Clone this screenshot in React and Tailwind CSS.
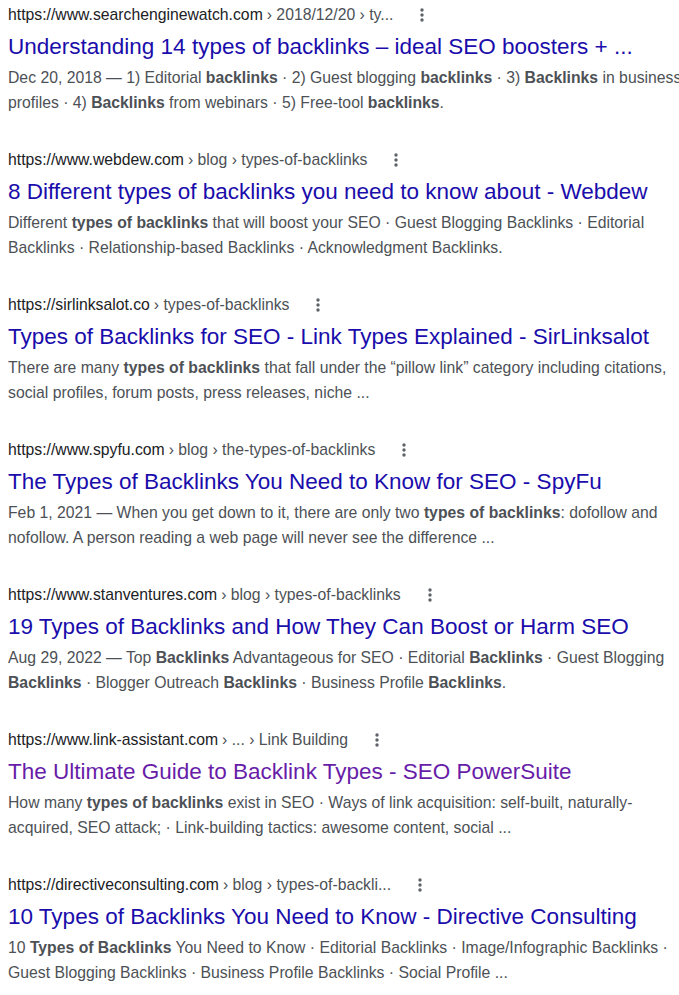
import React from "react";

const results = [
  {
    host: "https://www.searchenginewatch.com",
    path: "› 2018/12/20 › ty...",
    title: "Understanding 14 types of backlinks – ideal SEO boosters + ...",
    visited: false,
    lines: [
      [
        ["Dec 20, 2018 — 1) Editorial ", 0],
        ["backlinks", 1],
        [" · 2) Guest blogging ", 0],
        ["backlinks", 1],
        [" · 3) ", 0],
        ["Backlinks", 1],
        [" in business", 0],
      ],
      [
        ["profiles · 4) ", 0],
        ["Backlinks", 1],
        [" from webinars · 5) Free-tool ", 0],
        ["backlinks", 1],
        [".", 0],
      ],
    ],
  },
  {
    host: "https://www.webdew.com",
    path: "› blog › types-of-backlinks",
    title: "8 Different types of backlinks you need to know about - Webdew",
    visited: false,
    lines: [
      [
        ["Different ", 0],
        ["types of backlinks", 1],
        [" that will boost your SEO · Guest Blogging Backlinks · Editorial", 0],
      ],
      [["Backlinks · Relationship-based Backlinks · Acknowledgment Backlinks.", 0]],
    ],
  },
  {
    host: "https://sirlinksalot.co",
    path: "› types-of-backlinks",
    title: "Types of Backlinks for SEO - Link Types Explained - SirLinksalot",
    visited: false,
    lines: [
      [
        ["There are many ", 0],
        ["types of backlinks", 1],
        [" that fall under the “pillow link” category including citations,", 0],
      ],
      [["social profiles, forum posts, press releases, niche ...", 0]],
    ],
  },
  {
    host: "https://www.spyfu.com",
    path: "› blog › the-types-of-backlinks",
    title: "The Types of Backlinks You Need to Know for SEO - SpyFu",
    visited: false,
    lines: [
      [
        ["Feb 1, 2021 — When you get down to it, there are only two ", 0],
        ["types of backlinks", 1],
        [": dofollow and", 0],
      ],
      [["nofollow. A person reading a web page will never see the difference ...", 0]],
    ],
  },
  {
    host: "https://www.stanventures.com",
    path: "› blog › types-of-backlinks",
    title: "19 Types of Backlinks and How They Can Boost or Harm SEO",
    visited: false,
    lines: [
      [
        ["Aug 29, 2022 — Top ", 0],
        ["Backlinks", 1],
        [" Advantageous for SEO · Editorial ", 0],
        ["Backlinks", 1],
        [" · Guest Blogging", 0],
      ],
      [
        ["Backlinks", 1],
        [" · Blogger Outreach ", 0],
        ["Backlinks", 1],
        [" · Business Profile ", 0],
        ["Backlinks", 1],
        [".", 0],
      ],
    ],
  },
  {
    host: "https://www.link-assistant.com",
    path: "› ... › Link Building",
    title: "The Ultimate Guide to Backlink Types - SEO PowerSuite",
    visited: true,
    lines: [
      [
        ["How many ", 0],
        ["types of backlinks", 1],
        [" exist in SEO · Ways of link acquisition: self-built, naturally-", 0],
      ],
      [["acquired, SEO attack; · Link-building tactics: awesome content, social ...", 0]],
    ],
  },
  {
    host: "https://directiveconsulting.com",
    path: "› blog › types-of-backli...",
    title: "10 Types of Backlinks You Need to Know - Directive Consulting",
    visited: false,
    lines: [
      [
        ["10 ", 0],
        ["Types of Backlinks", 1],
        [" You Need to Know · Editorial Backlinks · Image/Infographic Backlinks ·", 0],
      ],
      [["Guest Blogging Backlinks · Business Profile Backlinks · Social Profile ...", 0]],
    ],
  },
];

function Dots() {
  return (
    <svg width="4" height="14" viewBox="0 0 4 14" className="ml-[27px] shrink-0">
      <circle cx="2" cy="2" r="1.7" fill="#5f6368" />
      <circle cx="2" cy="7" r="1.7" fill="#5f6368" />
      <circle cx="2" cy="12" r="1.7" fill="#5f6368" />
    </svg>
  );
}

function Result({ r }) {
  return (
    <div className="mb-[35px]">
      <div className="flex items-center h-[20px] text-[15.75px] leading-[20px] whitespace-nowrap">
        <span className="text-[#202124]">{r.host}</span>
        <span className="text-[#4d5156] ml-[4px]">{r.path}</span>
        <Dots />
      </div>
      <div
        className={
          "mt-[8px] h-[28px] text-[22.5px] leading-[28px] whitespace-nowrap " +
          (r.visited ? "text-[#681da8]" : "text-[#1a0dab]")
        }
      >
        {r.title}
      </div>
      <div className="mt-[5px] text-[15.75px] leading-[24.5px] text-[#4d5156] whitespace-nowrap">
        {r.lines.map((line, li) => (
          <div key={li}>
            {line.map(([t, b], i) =>
              b ? (
                <b key={i} className="font-bold text-[#4d5156]">
                  {t}
                </b>
              ) : (
                <span key={i}>{t}</span>
              )
            )}
          </div>
        ))}
      </div>
    </div>
  );
}

export default function App() {
  return (
    <div className="w-[679px] h-[995px] bg-white overflow-hidden pl-[8px] pt-[5px] font-['Liberation_Sans',Arial,sans-serif]">
      {results.map((r, i) => (
        <Result key={i} r={r} />
      ))}
    </div>
  );
}
